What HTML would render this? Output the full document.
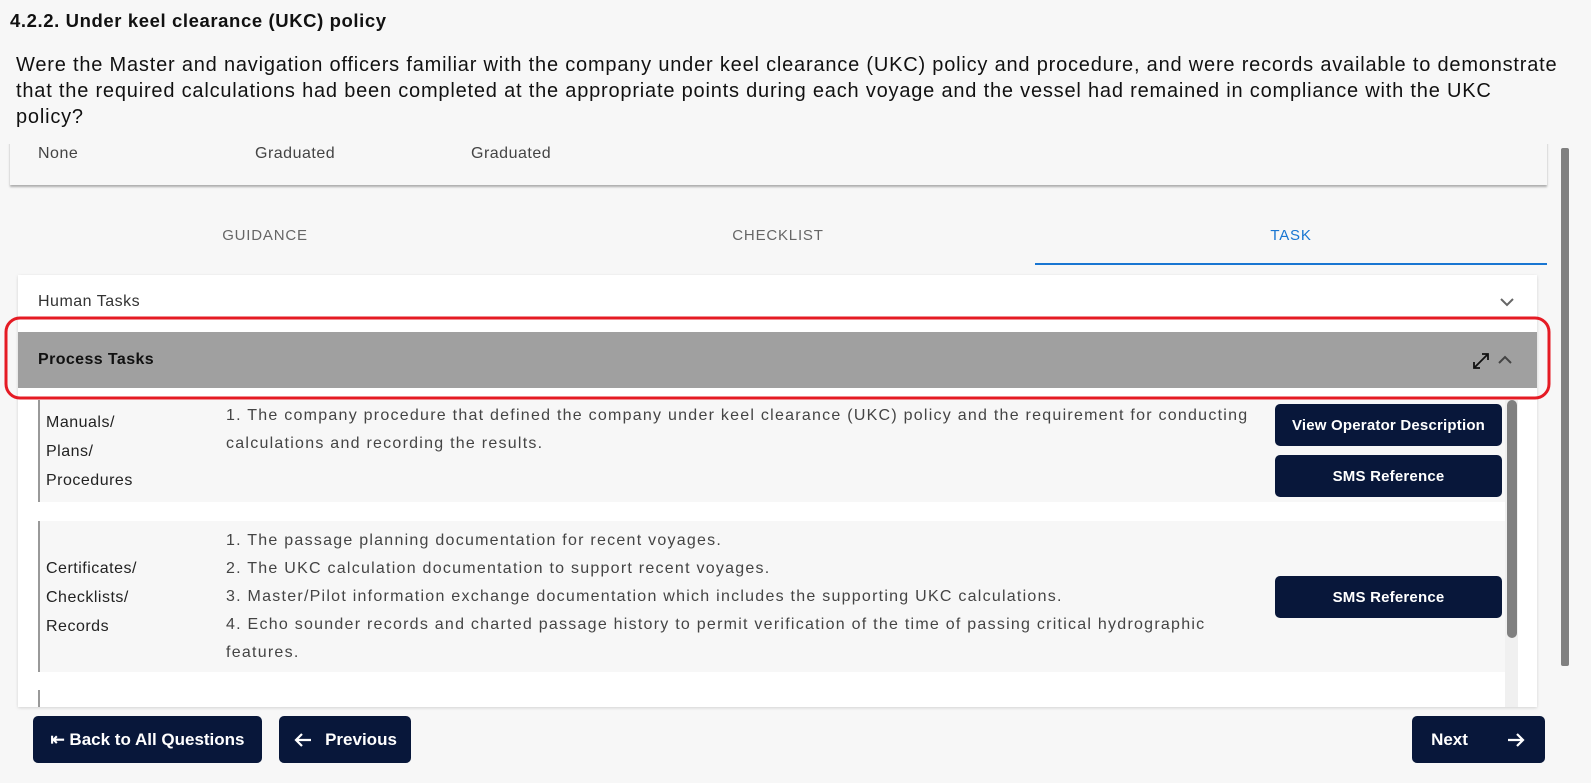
<!DOCTYPE html>
<html><head><meta charset="utf-8"><style>
*{box-sizing:border-box;margin:0;padding:0}
body{width:1591px;height:783px;overflow:hidden;background:#f7f7f7;font-family:"Liberation Sans",sans-serif;position:relative;color:#111}
.abs{position:absolute}
h1{position:absolute;left:10px;top:10px;font-size:18.5px;font-weight:bold;letter-spacing:0.6px;white-space:nowrap}
.q{position:absolute;left:16px;top:52px;width:1580px;font-size:20px;line-height:26px;color:#111;letter-spacing:0.8px;white-space:nowrap}
.sum{position:absolute;left:10px;top:140px;width:1537px;height:45px;background:#f7f7f7;box-shadow:0 2px 2px rgba(0,0,0,.3)}
.sum span{position:absolute;top:5px;font-size:16px;color:#444;letter-spacing:.5px}
.tab{position:absolute;top:227px;font-size:15px;color:#666;letter-spacing:.8px;transform:translateX(-50%)}
.card{position:absolute;left:18px;top:275px;width:1519px;height:432px;background:#fff;box-shadow:0 1px 3px rgba(0,0,0,.15);overflow:hidden}
.row{position:absolute;left:20px;width:1467px;background:#f7f7f7;border-left:2px solid #999}
.lab{position:absolute;left:6px;font-size:16px;line-height:29px;color:#222;letter-spacing:.5px}
.txt{position:absolute;left:186px;font-size:16px;line-height:28px;color:#444;letter-spacing:1.25px;white-space:nowrap}
.btn{position:absolute;background:#08173a;color:#fff;font-weight:bold;font-size:15px;border-radius:5px;display:flex;align-items:center;justify-content:center;letter-spacing:.2px}
.bb{position:absolute;background:#08173a;color:#fff;font-weight:bold;font-size:17px;border-radius:5px;display:flex;align-items:center;justify-content:center}
</style></head><body>
<h1>4.2.2. Under keel clearance (UKC) policy</h1>
<div class="q">Were the Master and navigation officers familiar with the company under keel clearance (UKC) policy and procedure, and were records available to demonstrate<br>that the required calculations had been completed at the appropriate points during each voyage and the vessel had remained in compliance with the UKC<br>policy?</div>
<div class="sum"><span style="left:28px">None</span><span style="left:245px">Graduated</span><span style="left:461px">Graduated</span></div>
<div class="abs" style="left:0;top:132px;width:1556px;height:12px;background:#f7f7f7"></div>
<div class="tab" style="left:265px">GUIDANCE</div>
<div class="tab" style="left:778px">CHECKLIST</div>
<div class="tab" style="left:1291px;color:#1976d2">TASK</div>
<div class="abs" style="left:1035px;top:263px;width:512px;height:2px;background:#1976d2"></div>
<div class="card">
 <div class="abs" style="left:20px;top:18px;font-size:16px;color:#333;letter-spacing:.5px">Human Tasks</div>
 <svg class="abs" style="left:1482px;top:22px" width="14" height="10" viewBox="0 0 14 10"><path d="M1 2l6 6 6-6" fill="none" stroke="#666" stroke-width="2"/></svg>
 <div class="abs" style="left:0;top:57px;width:1519px;height:56px;background:#a0a0a0"></div>
 <div class="abs" style="left:20px;top:76px;font-size:16px;font-weight:bold;color:#111;letter-spacing:.4px">Process Tasks</div>
 <svg class="abs" style="left:1453px;top:76px" width="20" height="20" viewBox="0 0 20 20"><path d="M3 17L17 3M11 3h6v6M3 11v6h6" fill="none" stroke="#111" stroke-width="1.8"/></svg>
 <svg class="abs" style="left:1480px;top:80px" width="14" height="10" viewBox="0 0 14 10"><path d="M1 8l6-6 6 6" fill="none" stroke="#444" stroke-width="2"/></svg>
 <div class="row" style="top:125px;height:102px">
  <div class="lab" style="top:8px">Manuals/<br>Plans/<br>Procedures</div>
  <div class="txt" style="top:2px">1. The company procedure that defined the company under keel clearance (UKC) policy and the requirement for conducting<br>calculations and recording the results.</div>
 </div>
 <div class="row" style="top:246px;height:151px">
  <div class="lab" style="top:33px">Certificates/<br>Checklists/<br>Records</div>
  <div class="txt" style="top:6px">1. The passage planning documentation for recent voyages.<br>2. The UKC calculation documentation to support recent voyages.<br>3. Master/Pilot information exchange documentation which includes the supporting UKC calculations.<br>4. Echo sounder records and charted passage history to permit verification of the time of passing critical hydrographic<br>features.</div>
 </div>
 <div class="abs" style="left:20px;top:415px;width:2px;height:20px;background:#999"></div>
 <div class="btn" style="left:1257px;top:129px;width:227px;height:42px">View Operator Description</div>
 <div class="btn" style="left:1257px;top:180px;width:227px;height:42px">SMS Reference</div>
 <div class="btn" style="left:1257px;top:301px;width:227px;height:42px">SMS Reference</div>
 <div class="abs" style="left:1487px;top:125px;width:13px;height:307px;background:#f0f0f0"></div>
 <div class="abs" style="left:1489px;top:125px;width:10px;height:238px;background:#808080;border-radius:5px"></div>
</div>
<svg class="abs" style="left:0;top:0" width="1591" height="783"><rect x="6" y="318" width="1543" height="80" rx="14" fill="none" stroke="#e51b24" stroke-width="3"/></svg>
<div class="abs" style="left:1561px;top:148px;width:8px;height:518px;background:#808080;border-radius:2px"></div>
<div class="bb" style="left:33px;top:716px;width:229px;height:47px">⇤ Back to All Questions</div>
<div class="bb" style="left:279px;top:716px;width:132px;height:47px"><svg width="20" height="16" viewBox="0 0 20 16" style="margin-right:12px"><path d="M18 8H3M9 2L3 8l6 6" fill="none" stroke="#fff" stroke-width="2.2"/></svg>Previous</div>
<div class="bb" style="left:1412px;top:716px;width:133px;height:47px">Next<svg width="20" height="16" viewBox="0 0 20 16" style="margin-left:38px"><path d="M2 8h15M11 2l6 6-6 6" fill="none" stroke="#fff" stroke-width="2.2"/></svg></div>
</body></html>
